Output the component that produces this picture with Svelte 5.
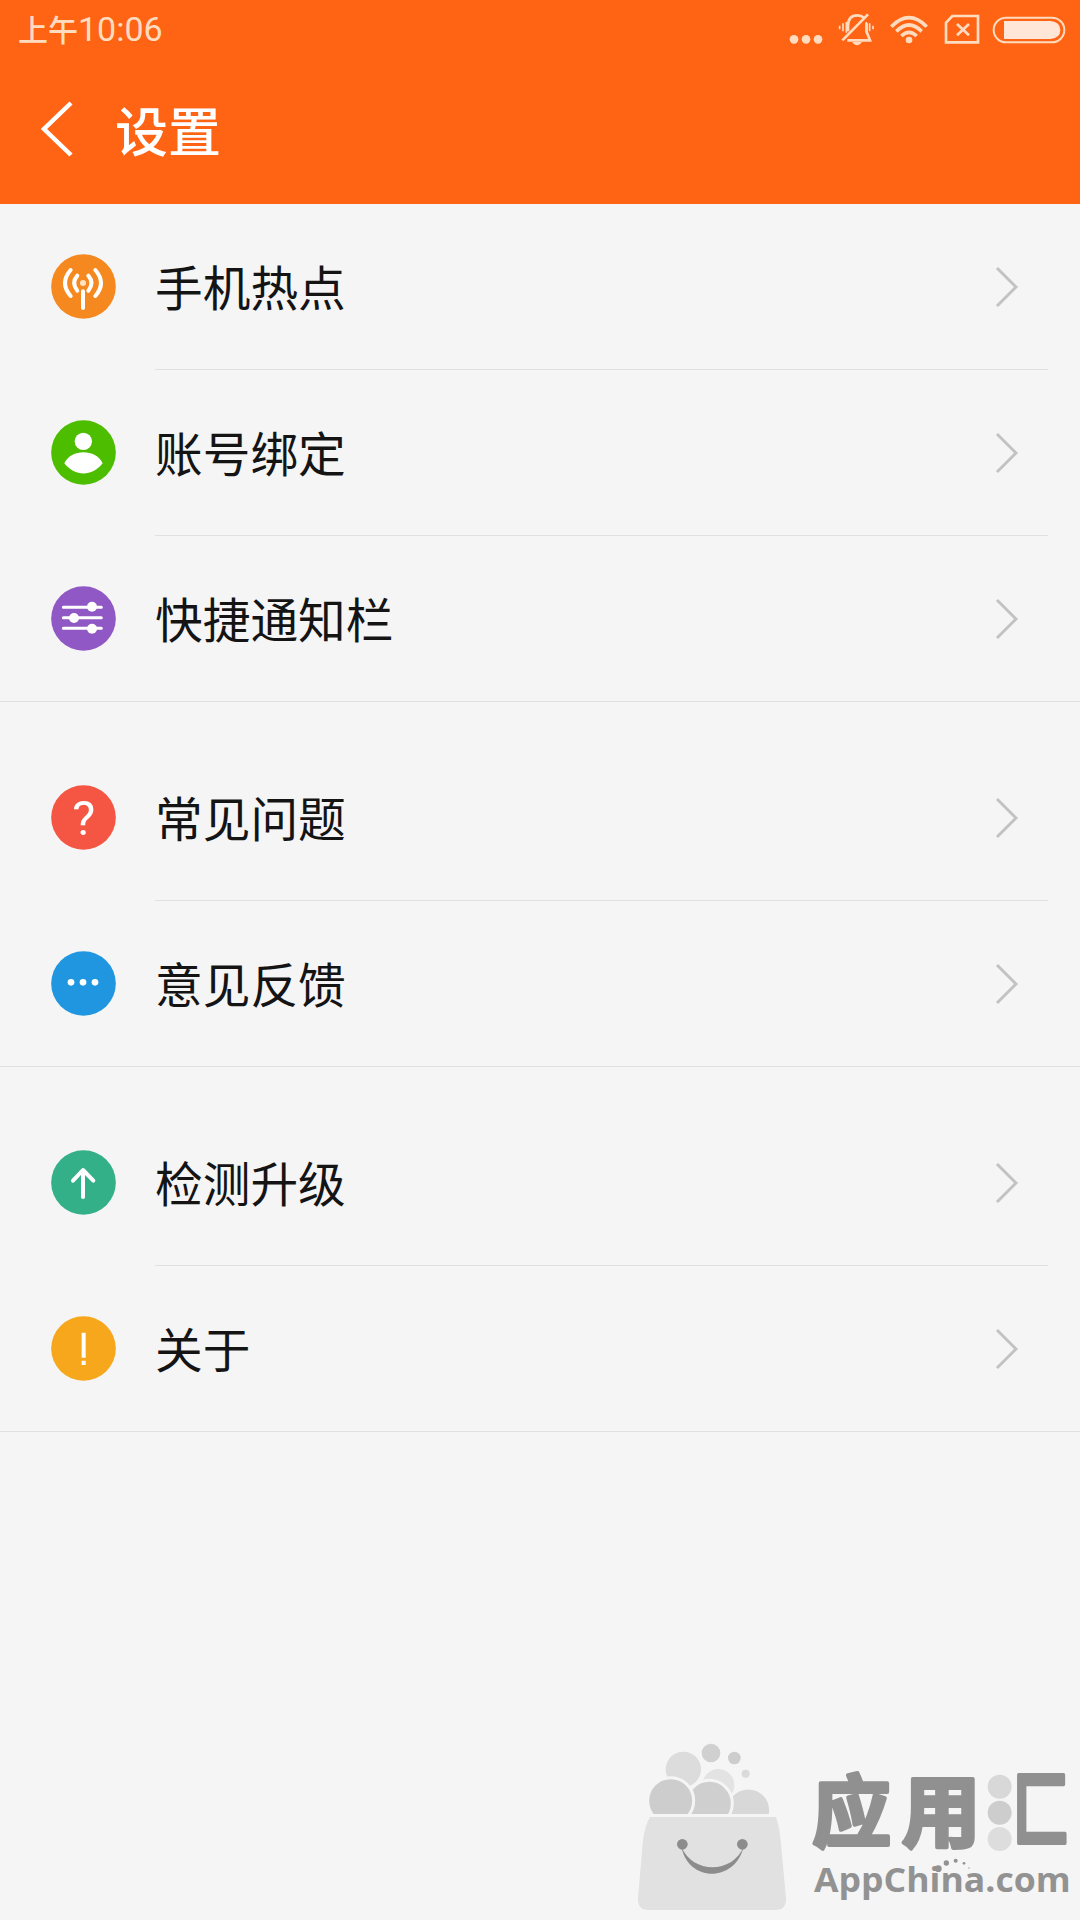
<script>
const groups = [
  [
    { id: 'hotspot', label: '手机热点', color: '#f5891f' },
    { id: 'account', label: '账号绑定', color: '#4dbd00' },
    { id: 'shortcut', label: '快捷通知栏', color: '#8f58c4' },
  ],
  [
    { id: 'faq', label: '常见问题', color: '#f55543' },
    { id: 'feedback', label: '意见反馈', color: '#2196e0' },
  ],
  [
    { id: 'upgrade', label: '检测升级', color: '#33b088' },
    { id: 'about', label: '关于', color: '#f6a71c' },
  ],
]
</script>

<div class="screen">
  <header class="header">
    <div class="status">
      <div class="time">上午<span class="digits">10:06</span></div>

      <svg width="310" height="60" viewBox="0 0 930 180">
        <g class="fill">
          <circle cx="72" cy="118" r="13" />
          <circle cx="108" cy="118" r="13" />
          <circle cx="144" cy="118" r="13" />
        </g>

        <!-- muted bell -->
        <g class="line">
          <path d="M234 94V78Q234 46 262 46Q274 46 282 53M290 70V96L300 121H232" />
          <path d="M294 43L217 121" />
          <path class="thin" d="M229 66V98M219 70V94M209 77V88M289 66V98M299 70V94M309 77V88" />
        </g>
        <path class="fill" d="M247 126H276Q270 136 262 136Q253 136 247 126Z" />

        <!-- wifi -->
        <g class="line wifi">
          <path d="M364 80Q417 26 470 80" />
          <path d="M379 94Q417 56 455 94" />
          <path d="M394 108Q417 86 440 108" />
        </g>
        <circle class="fill" cx="417" cy="120" r="10" />

        <!-- no sim -->
        <g class="line">
          <path d="M547 48H624V127H528V68Z" />
          <path d="M561 72L597 106M597 72L561 106" />
        </g>

        <!-- battery -->
        <rect class="line battery" x="671" y="53" width="212" height="74" rx="37" />
        <path class="full" d="M702 63H842Q871 66 871 90Q871 114 842 117H702Z" />
      </svg>
    </div>

    <div class="nav">
      <svg class="back" width="32" height="56" viewBox="0 0 32 56">
        <path d="M30 2L3 28L30 54" />
      </svg>
      <h1>设置</h1>
    </div>
  </header>

  <main>
    {#each groups as items}
      <ul class="group">
        {#each items as item (item.id)}
          <li class="row">
            <svg class="icon" viewBox="0 0 195 195">
              <circle cx="97.5" cy="97.5" r="97" fill={item.color} />
              {#if item.id === 'hotspot'}
                <g class="stroke" stroke-width="12">
                  <path d="M59 48Q25 87 59 126M79 65Q60 87 79 110" />
                  <path d="M133 48Q167 87 133 126M112 65Q131 87 112 110" />
                  <path d="M96 112V162" />
                </g>
                <circle cx="96" cy="87" r="9" fill="#ffe3c4" />
              {:else if item.id === 'account'}
                <circle cx="97" cy="64" r="26" fill="#fff" />
                <path d="M40 130C60 86 135 86 155 130C122 171 73 171 40 130Z" fill="#fff" />
              {:else if item.id === 'shortcut'}
                <path class="stroke" d="M37 64H151M37 95H151M37 127H151" stroke-width="9" />
                <circle cx="123" cy="62" r="15" fill="#fff" />
                <circle cx="69" cy="96" r="15" fill="#fff" />
                <circle cx="123" cy="128" r="15" fill="#fff" />
              {:else if item.id === 'faq'}
                <text x="98" y="149" text-anchor="middle">?</text>
              {:else if item.id === 'feedback'}
                <circle cx="60" cy="94" r="10" fill="#fff" />
                <circle cx="96" cy="94" r="10" fill="#fff" />
                <circle cx="132" cy="94" r="10" fill="#fff" />
              {:else if item.id === 'upgrade'}
                <path class="stroke" d="M96 62V141M66 92L96 60L127 92" stroke-width="12" />
              {:else}
                <path class="stroke square" d="M98 50V125M98 134V147" stroke-width="12" />
              {/if}
            </svg>
            <div class="row__body">
              <span class="label">{item.label}</span>
              <svg class="arrow" width="24" height="42" viewBox="0 0 24 42">
                <path d="M2 2L21 21L2 40" />
              </svg>
            </div>
          </li>
        {/each}
      </ul>
    {/each}
  </main>

  <footer>
    <svg width="460" height="190" viewBox="0 0 1380 570">
      <!-- bubbles -->
      <circle cx="273" cy="69" r="28" fill="#d0d0d0" />
      <circle cx="343" cy="84" r="19" fill="#cdcdcd" />
      <circle cx="377" cy="131" r="12" fill="#dadada" />
      <circle cx="190" cy="118" r="53" fill="#dcdcdc" />
      <circle cx="295" cy="165" r="48" fill="#e3e3e3" />
      <g stroke="#f5f5f5" stroke-width="9">
        <circle cx="385" cy="241" r="67" fill="#d8d8d8" />
        <circle cx="268" cy="220" r="69" fill="#cfcfcf" />
        <circle cx="152" cy="212" r="69" fill="#cdcdcd" />
      </g>

      <!-- bag -->
      <path d="M60 252H500V320H60Z" fill="#f5f5f5" />
      <path d="M90 261H468Q478 290 482 330L498 505Q499 540 466 540H85Q53 540 54 505L69 330Q75 285 90 261Z" fill="#e1e1e1" />
      <circle cx="187" cy="343" r="16" fill="#8c8c8c" />
      <circle cx="367" cy="343" r="16" fill="#8c8c8c" />
      <path d="M184 350C205 458 345 458 371 350C337 432 218 432 184 350Z" fill="#8c8c8c" />

      <g class="brand">
        <text x="577" y="334" textLength="504">应用</text>
        <text transform="translate(1178 331) scale(.72 1.04)" x="0" y="0">匚</text>
      </g>
      <circle cx="1139" cy="170" r="36" fill="#d8d8d8" />
      <circle cx="1139" cy="248" r="36" fill="#cdcdcd" />
      <circle cx="1139" cy="327" r="36" fill="#dddddd" />

      <text class="domain" x="582" y="486" textLength="770" lengthAdjust="spacingAndGlyphs">AppChina.com</text>
      <g fill="#929292">
        <circle cx="955" cy="416" r="10" />
        <circle cx="979" cy="399" r="8" />
        <circle cx="1007" cy="392" r="6" />
        <circle cx="1032" cy="400" r="4" />
        <circle cx="1047" cy="414" r="2" />
      </g>
    </svg>
  </footer>
</div>

<style>
:global(body) {
  background: #f5f5f5;
}

.screen {
  display: flex;
  flex-direction: column;
  width: 1080px;
  height: 1920px;
  overflow: hidden;
  background: #f5f5f5;
  font-family: "Noto Sans CJK SC", sans-serif;
}

.header {
  height: 204px;
  background: #ff6414;
  color: #fff;
}

.status {
  display: flex;
  justify-content: space-between;
  height: 60px;
}

.time {
  padding-left: 18px;
  font-size: 30px;
  font-weight: 500;
  line-height: 56px;
  color: #ffdcc0;
}

.digits {
  font-family: Roboto, sans-serif;
  font-size: 34px;
  font-weight: 400;
}

.fill {
  fill: #ffdcc0;
}

.full {
  fill: #ffe6d6;
}

.line {
  fill: none;
  stroke: #ffdcc0;
  stroke-width: 8px;
}

.thin {
  stroke-width: 5px;
}

.wifi {
  stroke-width: 11px;
}

.battery {
  stroke-width: 6px;
}

.nav {
  display: flex;
  align-items: center;
  gap: 42px;
  height: 138px;
  padding-left: 41px;
}

.back {
  fill: none;
  stroke: #fff;
  stroke-width: 4.5px;
}

h1 {
  margin: 0;
  font-size: 53px;
  font-weight: 500;
  line-height: 80px;
}

.group {
  margin: 0 0 33px;
  padding: 0;
  list-style: none;
  border-bottom: 1px solid #e0e0e0;
}

.row {
  display: flex;
  align-items: center;
  gap: 39px;
  height: 166px;
  padding: 0 32px 0 51px;
}

.row:last-child {
  height: 165px;
}

.icon {
  width: 65px;
  height: 65px;
  margin-bottom: 1px;
}

.icon text {
  font-family: Roboto, sans-serif;
  font-size: 146px;
  fill: #fff;
}

.stroke {
  fill: none;
  stroke: #fff;
  stroke-linecap: round;
  stroke-linejoin: round;
}

.square {
  stroke-linecap: butt;
}

.row__body {
  flex: 1;
  display: flex;
  align-items: center;
  justify-content: space-between;
  box-sizing: border-box;
  height: 100%;
  padding-right: 29px;
  border-bottom: 1px solid #e0e0e0;
  font-size: 47.7px;
  color: #141414;
}

.row:last-child .row__body {
  border-bottom: 0;
}

.label {
  padding-bottom: 2px;
}

.arrow {
  fill: none;
  stroke: #c2c2c2;
  stroke-width: 3px;
}

footer {
  display: flex;
  justify-content: flex-end;
  margin-top: auto;
}

.brand text {
  font-size: 236px;
  font-weight: 700;
  fill: #909090;
  stroke: #909090;
  stroke-width: 12px;
  stroke-linejoin: round;
}

.domain {
  font-family: "Open Sans", "Noto Sans", sans-serif;
  font-size: 104px;
  font-weight: 700;
  fill: #929292;
}
</style>
